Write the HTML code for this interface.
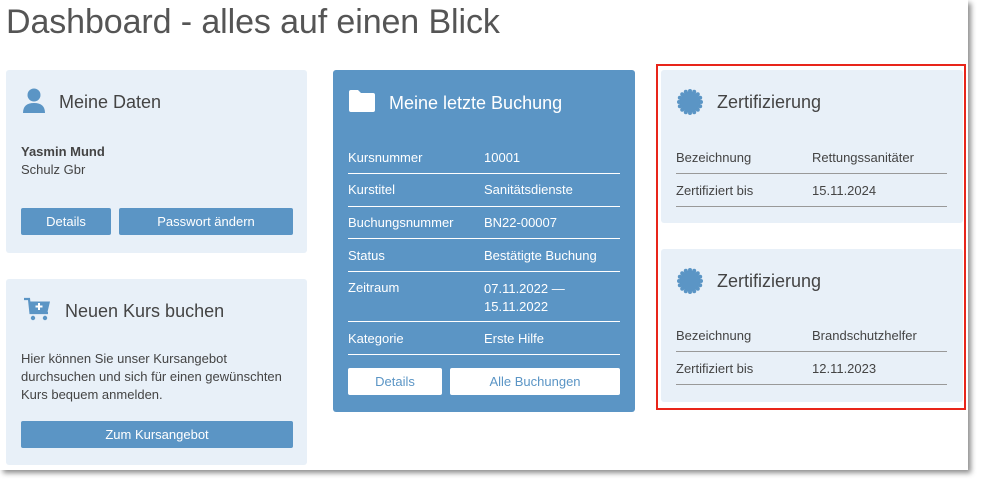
<!DOCTYPE html>
<html><head><meta charset="utf-8"><style>
*{box-sizing:border-box;margin:0;padding:0}
body{width:982px;height:484px;background:#fff;font-family:"Liberation Sans",sans-serif;color:#444;position:relative;overflow:hidden}
.page{position:absolute;left:0;top:0;width:968px;height:470px;background:#fff;box-shadow:3px 3px 5px rgba(0,0,0,.45)}
h1{position:absolute;left:6px;top:3px;font-size:34px;font-weight:normal;color:#555;letter-spacing:-0.1px}
.card{position:absolute;background:#e8f0f8;border-radius:3px}
.blue{background:#5b95c5;color:#fff}
.hd{position:absolute;font-size:18px;color:#444}
.btn{position:absolute;height:27px;background:#5b95c5;color:#fff;border-radius:2px;font-size:13px;text-align:center;line-height:28px}
.wbtn{background:#fff;color:#5b95c5}
.row{position:absolute;left:15px;width:272px;font-size:13px;border-bottom:1px solid #fff;padding-top:1px}
.row span{position:absolute;left:136px;top:1px}
.crow{position:absolute;left:15px;width:271px;font-size:13px;border-bottom:1px solid #999;height:33px}
.crow span{position:absolute;left:136px;top:9px}
.t{position:absolute;font-size:13px;line-height:18px}
</style></head><body>
<div class="page">
<h1>Dashboard - alles auf einen Blick</h1>

<div class="card" style="left:6px;top:70px;width:301px;height:183px">
<svg style="position:absolute;left:16px;top:18px" width="24" height="26" viewBox="0 0 24 26"><circle cx="12" cy="7" r="6.5" fill="#5b95c5"/><path d="M1 25 Q1 15 12 15 Q23 15 23 25Z" fill="#5b95c5"/></svg>
<div class="hd" style="left:53px;top:22px">Meine Daten</div>
<div class="t" style="left:15px;top:73px;font-weight:bold">Yasmin Mund</div>
<div class="t" style="left:15px;top:91px">Schulz Gbr</div>
<div class="btn" style="left:15px;top:138px;width:90px">Details</div>
<div class="btn" style="left:113px;top:138px;width:174px">Passwort ändern</div>
</div>

<div class="card" style="left:6px;top:279px;width:301px;height:186px">
<svg style="position:absolute;left:16px;top:17px" width="30" height="30" viewBox="0 0 30 30"><path d="M2 3 H7 L8.5 17 H26" stroke="#5b95c5" stroke-width="2.2" fill="none"/><path d="M7 5.5 H28 L25.5 16 H8.5Z" fill="#5b95c5"/><path d="M17 7 V14 M13.5 10.5 H20.5" stroke="#fff" stroke-width="2"/><circle cx="11" cy="22" r="2.2" fill="#5b95c5"/><circle cx="23" cy="22" r="2.2" fill="#5b95c5"/></svg>
<div class="hd" style="left:59px;top:22px">Neuen Kurs buchen</div>
<div class="t" style="left:15px;top:71px;width:280px">Hier können Sie unser Kursangebot durchsuchen und sich für einen gewünschten Kurs bequem anmelden.</div>
<div class="btn" style="left:15px;top:142px;width:272px">Zum Kursangebot</div>
</div>

<div class="card blue" style="left:333px;top:70px;width:302px;height:342px">
<svg style="position:absolute;left:16px;top:20px" width="26" height="22" viewBox="0 0 26 22"><path d="M0 2 Q0 0 2 0 H9 L12 3 H24 Q26 3 26 5 V20 Q26 22 24 22 H2 Q0 22 0 20Z" fill="#fff"/></svg>
<div class="hd" style="left:56px;top:23px;color:#fff">Meine letzte Buchung</div>
<div class="row" style="top:79px;height:25px">Kursnummer<span>10001</span></div>
<div class="row" style="top:111px;height:26px">Kurstitel<span>Sanitätsdienste</span></div>
<div class="row" style="top:144px;height:25px">Buchungsnummer<span>BN22-00007</span></div>
<div class="row" style="top:177px;height:25px">Status<span>Bestätigte Buchung</span></div>
<div class="row" style="top:209px;height:43px">Zeitraum<span style="line-height:18px">07.11.2022 —<br>15.11.2022</span></div>
<div class="row" style="top:260px;height:25px">Kategorie<span>Erste Hilfe</span></div>
<div class="btn wbtn" style="left:15px;top:298px;width:94px">Details</div>
<div class="btn wbtn" style="left:117px;top:298px;width:170px">Alle Buchungen</div>
</div>

<div class="card" style="left:661px;top:70px;width:302px;height:153px">
<svg style="position:absolute;left:15px;top:18px" width="28" height="28" viewBox="-14 -14 28 28"><circle r="10.5" fill="#5b95c5"/><g fill="#5b95c5"><circle cx="0" cy="-11" r="2"/><circle cx="0" cy="11" r="2"/><circle cx="-11" cy="0" r="2"/><circle cx="11" cy="0" r="2"/><circle cx="7.8" cy="7.8" r="2"/><circle cx="-7.8" cy="7.8" r="2"/><circle cx="7.8" cy="-7.8" r="2"/><circle cx="-7.8" cy="-7.8" r="2"/><circle cx="4.2" cy="-10.2" r="2"/><circle cx="-4.2" cy="-10.2" r="2"/><circle cx="4.2" cy="10.2" r="2"/><circle cx="-4.2" cy="10.2" r="2"/><circle cx="10.2" cy="4.2" r="2"/><circle cx="-10.2" cy="4.2" r="2"/><circle cx="10.2" cy="-4.2" r="2"/><circle cx="-10.2" cy="-4.2" r="2"/></g></svg>
<div class="hd" style="left:56px;top:22px">Zertifizierung</div>
<div class="crow" style="top:71px;height:33px;padding-top:9px">Bezeichnung<span>Rettungssanitäter</span></div>
<div class="crow" style="top:104px;height:33px;padding-top:9px">Zertifiziert bis<span>15.11.2024</span></div>
</div>

<div class="card" style="left:661px;top:249px;width:302px;height:153px">
<svg style="position:absolute;left:15px;top:18px" width="28" height="28" viewBox="-14 -14 28 28"><circle r="10.5" fill="#5b95c5"/><g fill="#5b95c5"><circle cx="0" cy="-11" r="2"/><circle cx="0" cy="11" r="2"/><circle cx="-11" cy="0" r="2"/><circle cx="11" cy="0" r="2"/><circle cx="7.8" cy="7.8" r="2"/><circle cx="-7.8" cy="7.8" r="2"/><circle cx="7.8" cy="-7.8" r="2"/><circle cx="-7.8" cy="-7.8" r="2"/><circle cx="4.2" cy="-10.2" r="2"/><circle cx="-4.2" cy="-10.2" r="2"/><circle cx="4.2" cy="10.2" r="2"/><circle cx="-4.2" cy="10.2" r="2"/><circle cx="10.2" cy="4.2" r="2"/><circle cx="-10.2" cy="4.2" r="2"/><circle cx="10.2" cy="-4.2" r="2"/><circle cx="-10.2" cy="-4.2" r="2"/></g></svg>
<div class="hd" style="left:56px;top:22px">Zertifizierung</div>
<div class="crow" style="top:70px;height:33px;padding-top:9px">Bezeichnung<span>Brandschutzhelfer</span></div>
<div class="crow" style="top:103px;height:33px;padding-top:9px">Zertifiziert bis<span>12.11.2023</span></div>
</div>

<div style="position:absolute;left:656px;top:64px;width:310px;height:346px;border:2px solid #e8251a"></div>
</div>
</body></html>
